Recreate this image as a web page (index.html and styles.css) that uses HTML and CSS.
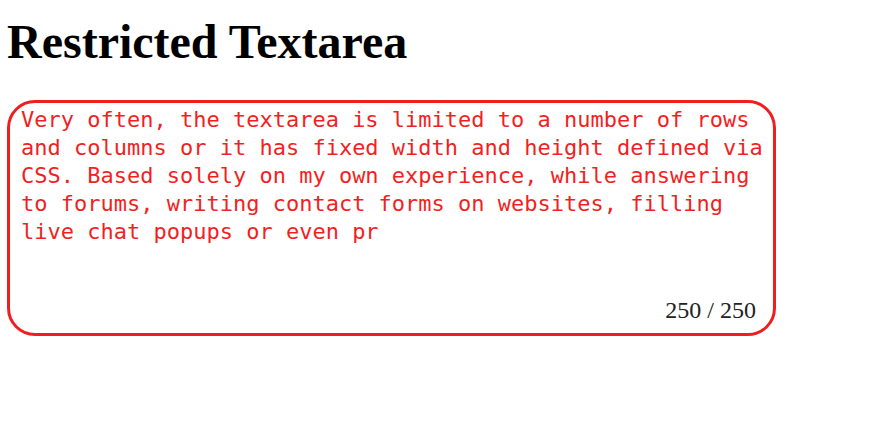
FILE: index.html
```html
<!DOCTYPE html>
<html lang="en">
<head>
<meta charset="utf-8">
<title>Restricted Textarea</title>
<link rel="stylesheet" href="styles.css">
</head>
<body>
<h1 class="title">Restricted Textarea</h1>
<div class="field">
  <div class="editor" role="textbox" aria-multiline="true">Very often, the textarea is limited to a number of rows<br>and columns or it has fixed width and height defined via<br>CSS. Based solely on my own experience, while answering<br>to forums, writing contact forms on websites, filling<br>live chat popups or even pr</div>
  <span class="counter">250 / 250</span>
</div>
</body>
</html>
```

FILE: styles.css
```css
html, body {
  margin: 0;
  padding: 0;
  background: #fff;
}
body {
  padding: 0 7px;
  font-family: "Liberation Serif", "Times New Roman", serif;
}
.title {
  font-family: "Liberation Serif", "Times New Roman", serif;
  font-weight: bold;
  font-size: 48px;
  line-height: 52px;
  margin: 16px 0 32px 0;
  color: #000;
}
.field {
  position: relative;
  box-sizing: border-box;
  width: 769px;
  height: 236px;
  border: 3px solid #ee1f1f;
  border-radius: 28px;
}
.editor {
  padding: 3px 11px 0 11px;
  font-family: "DejaVu Sans Mono", "Liberation Mono", monospace;
  font-size: 22px;
  line-height: 28px;
  color: #f21f1f;
  white-space: nowrap;
}
.counter {
  position: absolute;
  right: 17px;
  bottom: 9px;
  font-family: "Liberation Serif", "Times New Roman", serif;
  font-size: 24px;
  line-height: 28px;
  color: #222;
}
```
